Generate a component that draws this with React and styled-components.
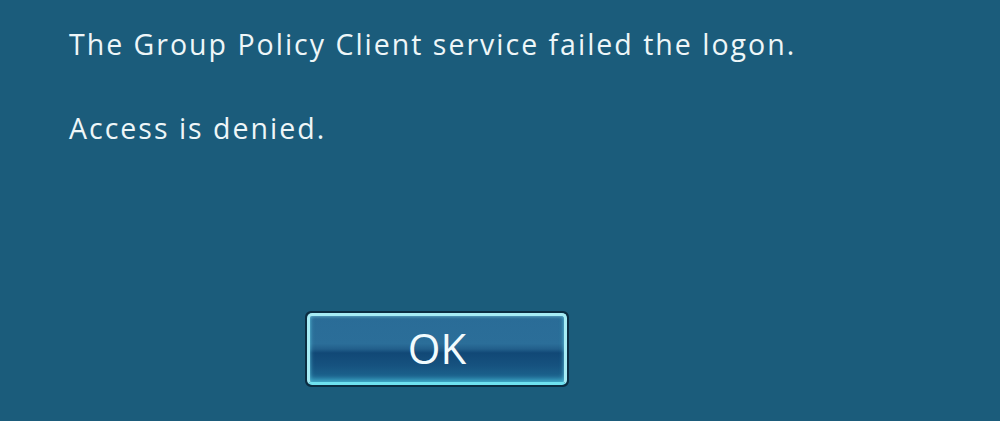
import React from 'react';
import styled, { createGlobalStyle } from 'styled-components';

const Global = createGlobalStyle`
  html, body {
    margin: 0;
    padding: 0;
    background: #1b5c7b;
  }
`;

const Screen = styled.div`
  width: 1000px;
  height: 421px;
  background: #1b5c7b;
  box-sizing: border-box;
  padding: 26px 0 0 69px;
  font-family: 'Open Sans', 'Noto Sans', sans-serif;
  color: #eef6f8;
  display: flex;
  flex-direction: column;
`;

const Message = styled.p`
  margin: 0;
  font-size: 28.5px;
  line-height: 36px;
  letter-spacing: 2px;
  white-space: nowrap;
  margin-bottom: ${(p) => p.gap || 0}px;
`;

const ButtonRow = styled.div`
  margin-top: 165px;
  padding-left: 236px;
`;

const OkButton = styled.button`
  width: 264px;
  height: 76px;
  box-sizing: border-box;
  border: 2px solid #0b2d42;
  border-radius: 6px;
  padding: 0;
  background: #0b2d42;
  cursor: pointer;
  display: block;
`;

const OkInner = styled.span`
  display: flex;
  align-items: center;
  justify-content: center;
  height: 100%;
  box-sizing: border-box;
  border: 3px solid #a6ecf5;
  border-bottom-color: #6fe2f0;
  border-radius: 5px;
  box-shadow: inset 0 -3px 5px rgba(90, 220, 240, 0.55), inset 0 1px 3px rgba(160, 230, 245, 0.4);
  background: linear-gradient(
    to bottom,
    #2a6c97 0%,
    #2b6e99 42%,
    #225f8b 50%,
    #114876 56%,
    #16527f 75%,
    #1e6a94 100%
  );
  font-family: 'Open Sans', 'Noto Sans', sans-serif;
  font-size: 42px;
  line-height: 1;
  color: #f2fbfd;
  padding-bottom: 2px;
`;

export default function App() {
  return (
    <>
      <Global />
      <Screen>
        <Message gap={48}>The Group Policy Client service failed the logon.</Message>
        <Message>Access is denied.</Message>
        <ButtonRow>
          <OkButton>
            <OkInner>OK</OkInner>
          </OkButton>
        </ButtonRow>
      </Screen>
    </>
  );
}
